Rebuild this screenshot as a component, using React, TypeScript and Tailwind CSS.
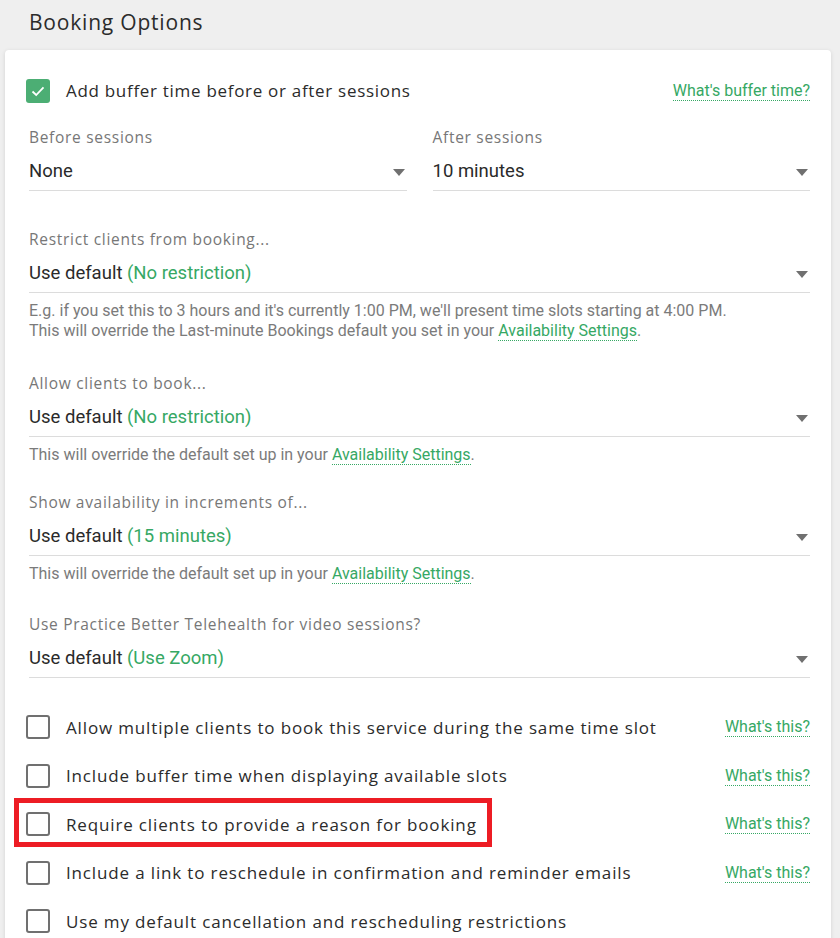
import React from "react";

const heading = "font-['Open_Sans',sans-serif]";
const body = "font-['Roboto',sans-serif]";

const Caret = () => (
  <svg width="12" height="7" viewBox="0 0 12 7" className="shrink-0">
    <path d="M0 0 L12 0 L6 7 Z" fill="#707070" />
  </svg>
);

const Help = ({ children }: { children: React.ReactNode }) => (
  <span className="text-[#36a864] border-b border-dotted border-[#36a864] leading-[17px] cursor-pointer">
    {children}
  </span>
);

const Field = ({
  label,
  value,
  note,
  className = "",
}: {
  label: string;
  value: React.ReactNode;
  note?: React.ReactNode;
  className?: string;
}) => (
  <div className={className}>
    <div className={`${heading} h-[20px] leading-[20px] text-[15.5px] tracking-[0.7px] text-[#777]`}>{label}</div>
    <div
      className={`${body} mt-[4px] h-[40px] pt-[3px] flex items-center justify-between border-b border-[#dcdcdc] text-[18.5px] text-[#2a2a2a] pr-[2px]`}
    >
      <span>{value}</span>
      <Caret />
    </div>
    {note && (
      <div className={`${body} mt-[8px] text-[16px] leading-[20px] text-[#7b7b7b]`}>{note}</div>
    )}
  </div>
);

const Box = ({ checked }: { checked?: boolean }) =>
  checked ? (
    <span className="w-[24px] h-[24px] rounded-[3px] bg-[#4cae74] flex items-center justify-center shrink-0">
      <svg width="16" height="16" viewBox="0 0 16 16">
        <path d="M2.5 8.5 L6.2 12 L13.5 4.3" fill="none" stroke="#fff" strokeWidth="1.8" />
      </svg>
    </span>
  ) : (
    <span className="w-[24px] h-[24px] rounded-[3px] border-2 border-[#707070] bg-white shrink-0" />
  );

const options = [
  { text: "Allow multiple clients to book this service during the same time slot", help: true },
  { text: "Include buffer time when displaying available slots", help: true },
  { text: "Require clients to provide a reason for booking", help: true, marked: true },
  { text: "Include a link to reschedule in confirmation and reminder emails", help: true },
  { text: "Use my default cancellation and rescheduling restrictions", help: false },
];

const Avail = () => <Help>Availability Settings</Help>;

export default function App() {
  return (
    <div className="h-[938px] bg-[#efefef] overflow-hidden">
      {/* Título */}
      <div className={`${heading} h-[46px] pl-[29px] flex items-center text-[21px] tracking-[0.8px] text-[#2b2b2b]`}>
        Booking Options
      </div>

      <div className="mt-[4px] ml-[5px] w-[826px] bg-white rounded-[4px] shadow-[0_1px_4px_rgba(0,0,0,0.12)] pl-[24px] pr-[21px] pt-[21px] pb-[40px]">
        {/* buffer */}
        <div className="-ml-[3px] h-[40px] flex items-center justify-between">
          <div className="flex items-center gap-[16px]">
            <Box checked />
            <span className={`${heading} text-[17px] tracking-[0.7px] text-[#2b2b2b]`}>
              Add buffer time before or after sessions
            </span>
          </div>
          <span className={`${body} text-[16px]`}>
            <Help>What's buffer time?</Help>
          </span>
        </div>

        <div className="mt-[16px] grid grid-cols-2 gap-[26px]">
          <Field label="Before sessions" value="None" />
          <Field label="After sessions" value="10 minutes" />
        </div>

        <Field
          className="mt-[38px]"
          label="Restrict clients from booking..."
          value={
            <>
              Use default <span className="text-[#36a864]">(No restriction)</span>
            </>
          }
          note={
            <>
              E.g. if you set this to 3 hours and it's currently 1:00 PM, we'll present time slots starting at 4:00 PM.
              <br />
              This will override the Last-minute Bookings default you set in your <Avail />.
            </>
          }
        />

        <Field
          className="mt-[32px]"
          label="Allow clients to book..."
          value={
            <>
              Use default <span className="text-[#36a864]">(No restriction)</span>
            </>
          }
          note={
            <>
              This will override the default set up in your <Avail />.
            </>
          }
        />

        <Field
          className="mt-[27px]"
          label="Show availability in increments of..."
          value={
            <>
              Use default <span className="text-[#36a864]">(15 minutes)</span>
            </>
          }
          note={
            <>
              This will override the default set up in your <Avail />.
            </>
          }
        />

        <Field
          className="mt-[30px]"
          label="Use Practice Better Telehealth for video sessions?"
          value={
            <>
              Use default <span className="text-[#36a864]">(Use Zoom)</span>
            </>
          }
        />

        {/* opciones */}
        <div className="mt-[25px] -ml-[3px]">
          {options.map((o) => (
            <div key={o.text} className="relative h-[48.5px] flex items-center justify-between">
              {o.marked && (
                <div className="absolute -left-[12px] top-[-2px] w-[478px] h-[49px] border-[5px] border-[#ed1c24] pointer-events-none" />
              )}
              <div className="flex items-center gap-[16px]">
                <Box />
                <span className={`${heading} text-[17px] tracking-[0.85px] text-[#2b2b2b]`}>{o.text}</span>
              </div>
              {o.help && (
                <span className={`${body} text-[16px]`}>
                  <Help>What's this?</Help>
                </span>
              )}
            </div>
          ))}
        </div>
      </div>
    </div>
  );
}
